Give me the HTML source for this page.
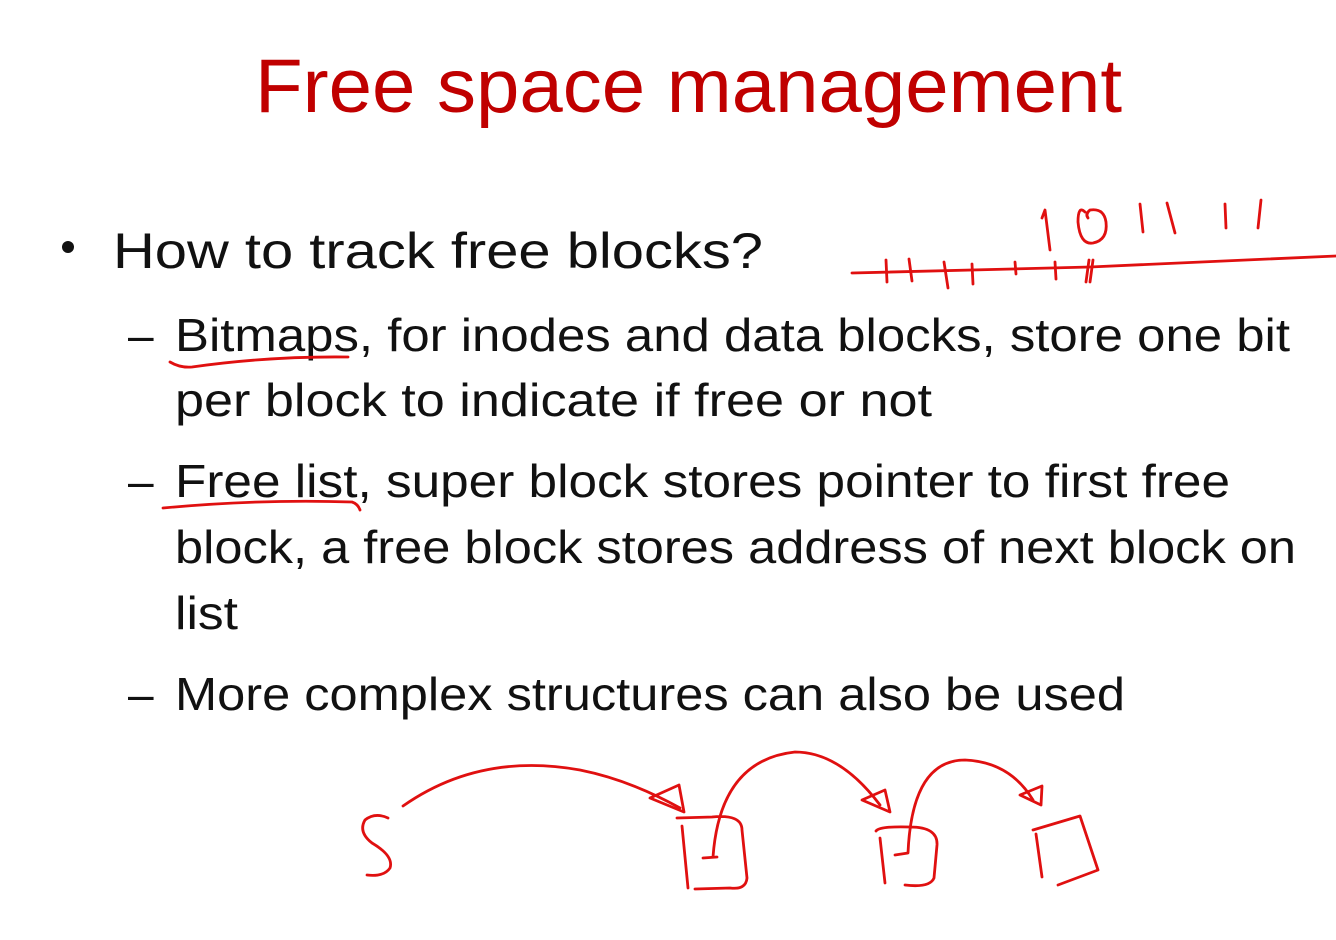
<!DOCTYPE html>
<html><head><meta charset="utf-8"><style>
html,body{margin:0;padding:0;background:#fff;width:1336px;height:940px;overflow:hidden}
svg{position:absolute;left:0;top:0}
text{font-family:"Liberation Sans",sans-serif}
</style></head><body>
<svg width="1336" height="940" viewBox="0 0 1336 940">
<text x="255" y="112" font-size="76" fill="#c00000" textLength="867" lengthAdjust="spacingAndGlyphs">Free space management</text>
<circle cx="68" cy="247" r="6" fill="#111"/>
<g fill="#111" font-size="50">
<text x="113" y="268" textLength="650" lengthAdjust="spacingAndGlyphs">How to track free blocks?</text>
</g>
<g fill="#111" font-size="46">
<text x="128" y="351">–</text>
<text x="175" y="351" textLength="1115" lengthAdjust="spacingAndGlyphs">Bitmaps, for inodes and data blocks, store one bit</text>
<text x="175" y="416" textLength="757" lengthAdjust="spacingAndGlyphs">per block to indicate if free or not</text>
<text x="128" y="497">–</text>
<text x="175" y="497" textLength="1055" lengthAdjust="spacingAndGlyphs">Free list, super block stores pointer to first free</text>
<text x="175" y="563" textLength="1121" lengthAdjust="spacingAndGlyphs">block, a free block stores address of next block on</text>
<text x="175" y="629" textLength="63" lengthAdjust="spacingAndGlyphs">list</text>
<text x="128" y="710">–</text>
<text x="175" y="710" textLength="950" lengthAdjust="spacingAndGlyphs">More complex structures can also be used</text>
</g>
<g fill="none" stroke="#e01010" stroke-width="2.8" stroke-linecap="round" stroke-linejoin="round">
<path d="M170 362 Q180 368 192 367 Q270 356 348 357"/>
<path d="M163 508 Q260 499 352 502 Q358 504 360 510"/>
<path d="M852 273 L1090 267 Q1200 262 1336 256"/>
<path d="M886 260 L887 282 M909 259 L912 281 M944 262 L948 288 M972 264 L973 284 M1015 262 L1016 274 M1055 262 L1056 279 M1089 260 L1086 282 M1093 260 L1090 282"/>
<path d="M1042 218 L1045 210 L1050 250"/>
<path d="M1085 212 Q1078 205 1078 222 Q1080 245 1093 243 Q1108 240 1106 222 Q1104 208 1090 210 Q1085 214 1088 218"/>
<path d="M1140 204 L1143 232 M1167 203 L1175 233 M1225 204 L1226 228 M1261 200 L1258 228"/>
<path d="M388 818 Q375 812 365 820 Q358 832 372 843 Q394 856 390 868 Q384 877 367 875"/>
<path d="M403 806 Q480 752 580 770 Q630 780 680 808"/>
<path d="M650 798 L679 785 L684 812 Z"/>
<path d="M677 818 L712 817 Q742 814 742 830 L747 878 Q746 890 730 888 L695 889 M682 826 L688 888 M703 858 L717 857 M713 857 Q720 760 795 752 Q840 752 880 805"/>
<path d="M862 800 L885 790 L890 812 Z"/>
<path d="M876 831 Q880 826 910 827 Q938 827 937 845 L934 878 Q930 888 905 885 M880 838 L885 883 M895 855 L908 853 Q912 760 965 760 Q1010 762 1033 800"/>
<path d="M1020 795 L1042 786 L1041 805 Z"/>
<path d="M1033 830 L1080 816 L1098 870 L1058 885 M1036 834 L1042 877"/>
</g>
</svg>
</body></html>
